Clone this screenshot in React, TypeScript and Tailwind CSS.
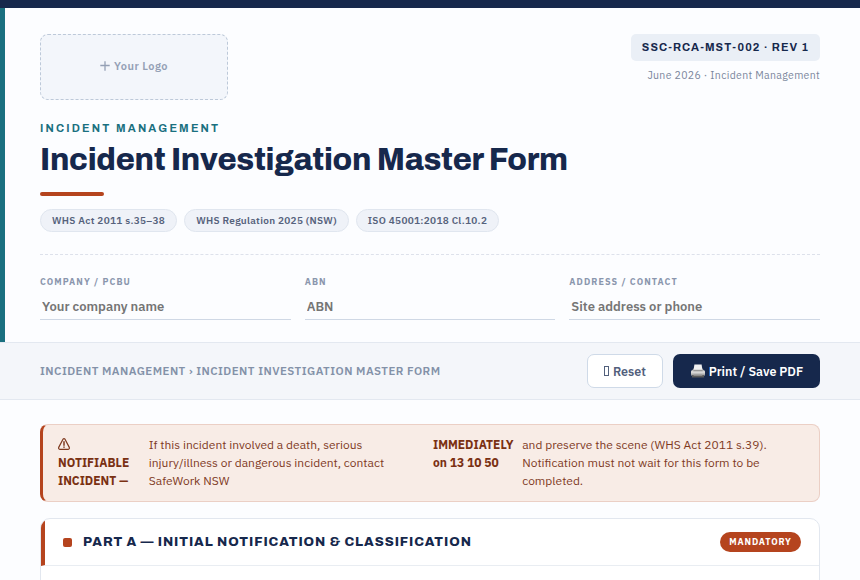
import React from "react";

interface Field {
  label: string;
  placeholder: string;
}

const tags = [
  { text: "WHS Act 2011 s.35–38", className: "w-[137px]" },
  { text: "WHS Regulation 2025 (NSW)", className: "w-[165px]" },
  { text: "ISO 45001:2018 Cl.10.2", className: "w-[143px]" },
];

const fields: Field[] = [
  { label: "COMPANY / PCBU", placeholder: "Your company name" },
  { label: "ABN", placeholder: "ABN" },
  { label: "ADDRESS / CONTACT", placeholder: "Site address or phone" },
];

const PrinterIcon: React.FC = () => (
  <svg width="14" height="14" viewBox="0 0 14 14" className="shrink-0">
    <path d="M2.6 4.6h8.8L13.8 7.6H.2z" fill="#a4a4a4" />
    <path d="M3.4.4h7.2l.8 5.4H2.6z" fill="#f1f1f1" />
    <rect x="0" y="6.6" width="14" height="4.6" rx="0.9" fill="#d6d6d6" />
    <path d="M2.6 6.2h8.8l.4 1H2.2z" fill="#8d8d8d" />
    <rect x="0" y="9.6" width="14" height="2" rx="0.6" fill="#a9a9a9" />
    <path d="M1.2 11h11.6l.4 2.6H.8z" fill="#5a5a5a" />
    <path d="M2.8 10.8h8.4l.4 1.2H2.4z" fill="#8a8a8a" />
  </svg>
);

const WarningIcon: React.FC = () => (
  <svg
    width="12"
    height="12"
    viewBox="0 0 12 12"
    fill="none"
    stroke="#7f3a1f"
    strokeLinecap="round"
    strokeLinejoin="round"
  >
    <path d="M5 1.2Q6 .1 7 1.2L11.3 9.4Q11.7 11.2 10.2 11.3H1.8Q.3 11.2.7 9.4Z" strokeWidth="1.2" />
    <path d="M6 3.8v3.4M6 9.1v.2" strokeWidth="1.5" />
  </svg>
);

const App: React.FC = () => {
  return (
    <div className="h-[580px] overflow-hidden bg-[#fcfdff] font-['IBM_Plex_Sans','Noto_Sans',sans-serif] text-[#16284c]">
      <div className="h-2 bg-[#16284c]" />

      {/* Document header */}
      <header className="h-[334px] border-l-[5px] border-[#1a7080] pt-[26px] pr-10 pl-[35px]">
        <div className="flex items-start justify-between">
          <div className="flex h-[66px] w-[188px] items-center justify-center gap-[4px] rounded-lg border border-dashed border-[#bdc9d9] bg-[#f3f6fb] pb-0.5 text-[11px] font-semibold tracking-[0.44px] text-[#94a0b5]">
            <svg width="10" height="10" viewBox="0 0 10 10" stroke="#94a0b5" strokeWidth="1.3">
              <path d="M5 .2v9.6M.3 4.5h9.4" />
            </svg>
            Your Logo
          </div>
          <div className="flex flex-col items-end">
            <div className="flex h-[27px] w-[189px] items-center justify-center rounded-[5px] bg-[#eaeff6] font-['Archivo','Liberation_Sans',sans-serif] text-[11px] font-bold tracking-[1.1px] whitespace-nowrap">
              SSC-RCA-MST-002 · REV 1
            </div>
            <div className="mt-1.5 text-[10.5px] leading-4 tracking-[0.32px] text-[#7b879d]">
              June 2026 · Incident Management
            </div>
          </div>
        </div>

        <div className="mt-5 font-['Archivo','Liberation_Sans',sans-serif] text-[11px] leading-4 font-bold tracking-[2.2px] text-[#1a7080]">
          INCIDENT MANAGEMENT
        </div>
        <h1 className="mt-[5px] font-['Archivo','Liberation_Sans',sans-serif] text-[31px] leading-[38px] font-extrabold tracking-[-0.31px] whitespace-nowrap">
          Incident Investigation Master Form
        </h1>
        <div className="mt-[13px] h-1 w-16 rounded-sm bg-[#b5441e]" />

        <div className="mt-[13px] flex gap-[7px]">
          {tags.map((tag) => (
            <span
              key={tag.text}
              className={`flex h-[23px] items-center justify-center rounded-full border border-[#e0e6ef] bg-[#eff2f8] text-[10px] font-semibold tracking-[0.3px] whitespace-nowrap text-[#56627c] ${tag.className}`}
            >
              {tag.text}
            </span>
          ))}
        </div>

        <div className="mt-[22px] grid grid-cols-3 gap-[14px] border-t border-dashed border-[#dde1eb] pt-[20px]">
          {fields.map((field) => (
            <label key={field.label} className="flex flex-col">
              <span className="text-[9px] leading-[14px] font-bold tracking-[1.08px] text-[#8a96ad]">
                {field.label}
              </span>
              <input
                className="mt-1 h-[27px] w-full border-b border-[#cfd8e5] px-0.5 text-[13px] font-semibold outline-none placeholder:text-[#757575]"
                placeholder={field.placeholder}
              />
            </label>
          ))}
        </div>
      </header>

      {/* Toolbar */}
      <div className="flex h-[58px] items-center justify-between border-y border-[#e3e8f0] bg-[#f4f6fa] px-10">
        <span className="text-[11.5px] font-semibold tracking-[0.46px] whitespace-nowrap text-[#8391a8]">
          INCIDENT MANAGEMENT › INCIDENT INVESTIGATION MASTER FORM
        </span>
        <div className="flex gap-2.5">
          <button className="flex h-[34px] w-[76px] items-center justify-center gap-1 rounded-[7px] border border-[#cfdae8] bg-white text-[12.5px] font-semibold text-[#52607c]">
            <span className="h-[10px] w-[5px] border border-[#52607c]" />
            Reset
          </button>
          <button className="flex h-[34px] w-[147px] items-center justify-center gap-1 rounded-[7px] bg-[#16284c] pl-px text-[12.5px] font-semibold whitespace-nowrap text-white">
            <PrinterIcon />
            Print / Save PDF
          </button>
        </div>
      </div>

      <main className="px-10 pt-6">
        {/* Notifiable incident alert */}
        <div className="flex h-[78px] rounded-lg border border-l-[3px] border-[#ebcfc5] border-l-[#b5441e] bg-[#f8ece6] pt-[11px] pl-[15px] text-[12px] leading-[18px] whitespace-nowrap text-[#7f3a1f]">
          <strong className="w-[90.8px] font-bold text-[#7a3012]">
            <span className="flex h-[18px] items-center pb-0.5">
              <WarningIcon />
            </span>
            NOTIFIABLE
            <br />
            INCIDENT —
          </strong>
          <p className="w-[284.2px]">
            If this incident involved a death, serious
            <br />
            injury/illness or dangerous incident, contact
            <br />
            SafeWork NSW
          </p>
          <strong className="w-[89.2px] font-bold text-[#7a3012]">
            IMMEDIATELY
            <br />
            on 13 10 50
          </strong>
          <p>
            and preserve the scene (WHS Act 2011 s.39).
            <br />
            Notification must not wait for this form to be
            <br />
            completed.
          </p>
        </div>

        {/* Part A */}
        <section className="mt-4 h-[120px] overflow-hidden rounded-[10px] border border-[#e2e7ef] bg-white">
          <div className="flex h-[47px] items-center border-b border-l-4 border-[#e9edf2] border-l-[#b5441e] pr-[18px] pl-[18px]">
            <span className="size-[9px] rounded-[2px] bg-[#b5441e]" />
            <h2 className="ml-[11px] pt-px font-['Archivo','Liberation_Sans',sans-serif] text-[13px] font-extrabold tracking-[0.91px]">
              PART A — INITIAL NOTIFICATION &amp; CLASSIFICATION
            </h2>
            <span className="ml-auto flex h-5 w-[81px] items-center justify-center rounded-full bg-[#b5441e] text-[9px] font-bold tracking-[0.9px] text-white">
              MANDATORY
            </span>
          </div>
        </section>
      </main>
    </div>
  );
};

export default App;
